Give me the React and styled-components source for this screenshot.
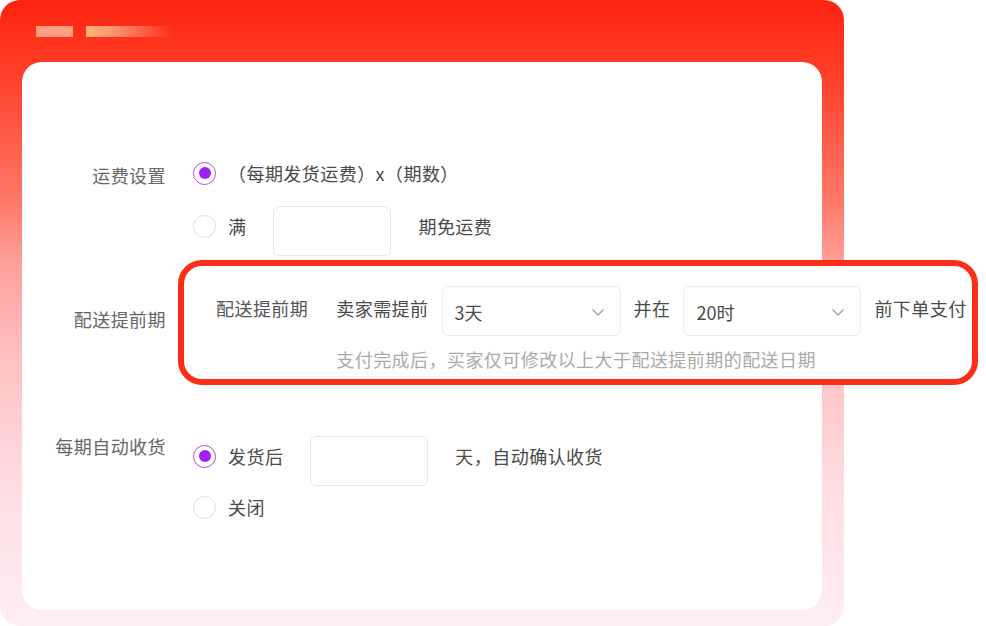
import React from "react";
import styled, { createGlobalStyle } from "styled-components";

const GlobalStyle = createGlobalStyle`
  html, body { margin: 0; padding: 0; background: #ffffff; }
  body {
    font-family: "Noto Sans CJK SC", "Noto Sans", "Liberation Sans", sans-serif;
    letter-spacing: 0.45px;
    -webkit-font-smoothing: antialiased;
  }
  * { box-sizing: border-box; }
`;

const Page = styled.div`
  position: relative;
  width: 986px;
  height: 626px;
  overflow: hidden;
`;

const Frame = styled.div`
  width: 844px;
  height: 626px;
  display: flex;
  flex-direction: column;
  padding: 0 22px 16px;
  border-radius: 20px;
  background: linear-gradient(
    180deg,
    #fd2410 0%,
    #ff3a24 10%,
    #ff7868 32%,
    #ffa09c 42%,
    #ffc2c2 58%,
    #ffdfe5 80%,
    #fdeef3 100%
  );
`;

const Header = styled.div`
  height: 62px;
  flex: none;
  display: flex;
  align-items: center;
  gap: 13px;
  padding-left: 14px;
`;

const Bar = styled.div`
  height: 11px;
  width: ${(p) => p.$w}px;
  background: ${(p) => p.$bg};
`;

const Card = styled.div`
  flex: 1;
  background: #ffffff;
  border-radius: 20px;
  padding-top: 100px;
  display: flex;
  flex-direction: column;
`;

const Section = styled.div`
  display: grid;
  grid-template-columns: 144px 1fr;
  column-gap: 27px;
  margin-top: ${(p) => p.$mt || 0}px;
`;

const Label = styled.div`
  text-align: right;
  color: #666;
  font-size: 18px;
  line-height: 26px;
  white-space: nowrap;
`;

const Options = styled.div`
  display: flex;
  flex-direction: column;
  gap: ${(p) => p.$gap || 0}px;
  padding-top: ${(p) => p.$pt || 0}px;
  min-height: 26px;
`;

const OptionRow = styled.div`
  display: flex;
  align-items: flex-start;
`;

const Choice = styled.label`
  display: flex;
  align-items: center;
  height: 22px;
  margin-top: ${(p) => (p.$offset ? 9 : 0)}px;
  color: #4a4a4a;
  font-size: 18px;
  white-space: nowrap;
`;

const RadioCircle = styled.span`
  width: 23px;
  height: 23px;
  flex: none;
  border-radius: 50%;
  border: 1.5px solid ${(p) => (p.$checked ? "#b44ae6" : "#dedede")};
  display: flex;
  align-items: center;
  justify-content: center;
  margin-right: 12px;
  background: #fff;
  &::after {
    content: "";
    display: ${(p) => (p.$checked ? "block" : "none")};
    width: 12px;
    height: 12px;
    border-radius: 50%;
    background: #a21ef2;
  }
`;

const InputBox = styled.div`
  width: 118px;
  height: 50px;
  flex: none;
  border: 1px solid #e6e6e6;
  border-radius: 6px;
  margin: 0 27px;
`;

const Trail = styled.span`
  color: #4a4a4a;
  font-size: 18px;
  line-height: 22px;
  margin-top: 9px;
  white-space: nowrap;
`;

const Highlight = styled.div`
  position: absolute;
  left: 178px;
  top: 260px;
  width: 800px;
  border: 6px solid #fd2e18;
  border-radius: 24px;
  background: #ffffff;
  padding: 20px 0 7px 32px;
  display: grid;
  grid-template-columns: auto 1fr;
  column-gap: 28px;
`;

const HLLabel = styled.div`
  color: #555;
  font-size: 18px;
  line-height: 26px;
  margin-top: 9px;
  white-space: nowrap;
`;

const HLRow = styled.div`
  display: flex;
  align-items: flex-start;
  gap: 13px;
`;

const HLText = styled.span`
  color: #4a4a4a;
  font-size: 18px;
  line-height: 26px;
  margin-top: 9px;
  white-space: nowrap;
`;

const Select = styled.div`
  width: ${(p) => p.$w}px;
  height: 50px;
  flex: none;
  display: flex;
  align-items: center;
  justify-content: space-between;
  padding: 2px 16px 0 12px;
  border: 1px solid #ececec;
  border-radius: 6px;
  color: #4a4a4a;
  font-size: 18px;
  letter-spacing: 0;
`;

const Hint = styled.div`
  margin-top: 10px;
  color: #aaa;
  font-size: 18px;
  line-height: 26px;
  white-space: nowrap;
`;

const Chevron = () => (
  <svg width="12" height="7" viewBox="0 0 12 7" fill="none">
    <path d="M1 1l5 5 5-5" stroke="#9a9a9a" strokeWidth="1.3" strokeLinecap="round" strokeLinejoin="round" />
  </svg>
);

const Radio = ({ checked, children, offset }) => (
  <Choice $offset={offset}>
    <RadioCircle $checked={checked} />
    {children}
  </Choice>
);

export default function App() {
  return (
    <>
      <GlobalStyle />
      <Page>
        <Frame>
          <Header>
            <Bar $w={37} $bg="#ff9f82" />
            <Bar $w={86} $bg="linear-gradient(90deg, #ffb478 0%, #ff8f70 35%, rgba(255,80,50,0) 100%)" />
          </Header>
          <Card>
            <Section>
              <Label>运费设置</Label>
              <Options $gap={22}>
                <OptionRow>
                  <Radio checked>（每期发货运费）x（期数）</Radio>
                </OptionRow>
                <OptionRow>
                  <Radio offset>满</Radio>
                  <InputBox />
                  <Trail>期免运费</Trail>
                </OptionRow>
              </Options>
            </Section>
            <Section $mt={50}>
              <Label>配送提前期</Label>
              <Options />
            </Section>
            <Section $mt={101}>
              <Label>每期自动收货</Label>
              <Options $gap={10} $pt={3}>
                <OptionRow>
                  <Radio checked offset>发货后</Radio>
                  <InputBox />
                  <Trail>天，自动确认收货</Trail>
                </OptionRow>
                <OptionRow>
                  <Radio>关闭</Radio>
                </OptionRow>
              </Options>
            </Section>
          </Card>
        </Frame>
        <Highlight>
          <HLLabel>配送提前期</HLLabel>
          <div>
            <HLRow>
              <HLText>卖家需提前</HLText>
              <Select $w={179}>
                <span>3天</span>
                <Chevron />
              </Select>
              <HLText>并在</HLText>
              <Select $w={178}>
                <span>20时</span>
                <Chevron />
              </Select>
              <HLText>前下单支付</HLText>
            </HLRow>
            <Hint>支付完成后，买家仅可修改以上大于配送提前期的配送日期</Hint>
          </div>
        </Highlight>
      </Page>
    </>
  );
}
